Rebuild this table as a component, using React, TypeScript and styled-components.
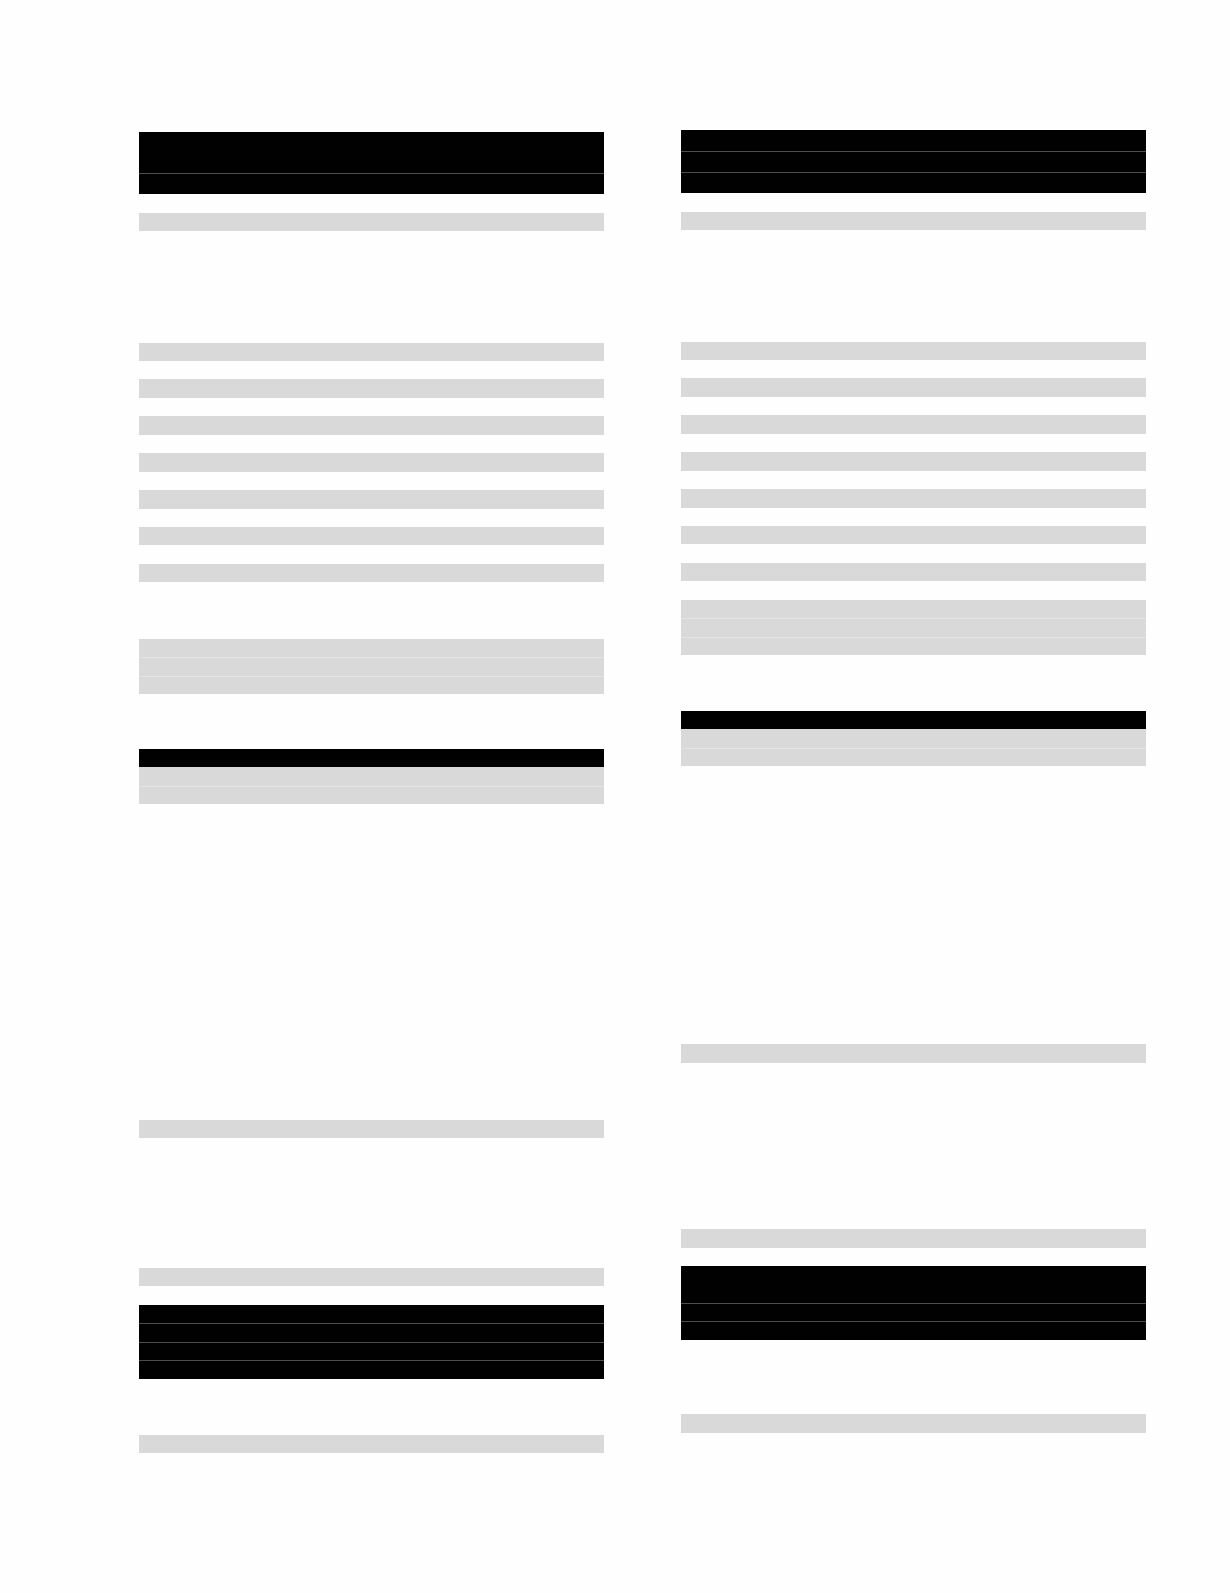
import React from "react";
import styled, { createGlobalStyle } from "styled-components";

type Tone = "dark" | "light";

interface Row {
  h: number;
  tone: Tone;
}

interface Block {
  top: number;
  rows: Row[];
}

const dark = (...hs: number[]): Row[] => hs.map((h) => ({ h, tone: "dark" as Tone }));
const light = (...hs: number[]): Row[] => hs.map((h) => ({ h, tone: "light" as Tone }));

// seven single grey lines, evenly spaced
const ruled = (start: number): Block[] =>
  Array.from({ length: 7 }, (_, i) => ({ top: start + i * 36.9, rows: light(18.5) }));

const LEFT: Block[] = [
  { top: 132, rows: dark(41, 21) },
  { top: 212.5, rows: light(18.5) },
  ...ruled(342.5),
  { top: 639, rows: light(18.5, 18.5, 18.5) },
  { top: 749, rows: [...dark(18.5), ...light(18.5, 18.5)] },
  { top: 1120, rows: light(18.5) },
  { top: 1268, rows: light(18.5) },
  { top: 1305, rows: dark(18.5, 18.5, 18.5, 18.5) },
  { top: 1435, rows: light(18.5) },
];

const RIGHT: Block[] = [
  { top: 130, rows: dark(21, 21, 21) },
  { top: 211.5, rows: light(18.5) },
  ...ruled(341.5),
  { top: 600, rows: light(18.5, 18.5, 18.5) },
  { top: 711, rows: [...dark(18.5), ...light(18.5, 18.5)] },
  { top: 1044.5, rows: light(18.5) },
  { top: 1229.5, rows: light(18.5) },
  { top: 1266, rows: dark(37, 18.5, 18.5) },
  { top: 1414.5, rows: light(18.5) },
];

const Column: React.FC<{ blocks: Block[] }> = ({ blocks }) => {
  let bottom = 0;
  return (
    <ColumnWrap>
      {blocks.map((block, i) => {
        const gap = block.top - bottom;
        bottom = block.top + block.rows.reduce((sum, r) => sum + r.h, 0);
        return (
          <BlockBox key={i} $gap={gap}>
            {block.rows.map((row, j) => (
              <Line
                key={j}
                $h={row.h}
                $tone={row.tone}
                $ruled={j > 0 && block.rows[j - 1].tone === row.tone}
              />
            ))}
          </BlockBox>
        );
      })}
    </ColumnWrap>
  );
};

export default function App() {
  return (
    <>
      <GlobalStyle />
      <Page>
        <Column blocks={LEFT} />
        <Column blocks={RIGHT} />
      </Page>
    </>
  );
}

const GlobalStyle = createGlobalStyle`
  html, body {
    margin: 0;
    padding: 0;
    background: #fefefe;
    font-family: "Liberation Sans", Arial, sans-serif;
  }
`;

const Page = styled.div`
  width: 1230px;
  min-height: 1593px;
  box-sizing: border-box;
  padding-left: 139px;
  display: grid;
  grid-template-columns: 465px 465px;
  column-gap: 77px;
  align-items: start;
`;

const ColumnWrap = styled.div`
  display: flex;
  flex-direction: column;
`;

const BlockBox = styled.div<{ $gap: number }>`
  margin-top: ${(p) => p.$gap}px;
  display: flex;
  flex-direction: column;
`;

const Line = styled.div<{ $h: number; $tone: Tone; $ruled: boolean }>`
  height: ${(p) => p.$h}px;
  background: ${(p) => (p.$tone === "dark" ? "#010101" : "#d9d9d9")};
  box-shadow: ${(p) =>
    p.$ruled
      ? `inset 0 1px 0 ${p.$tone === "dark" ? "#4d4d4d" : "#e4e4e4"}`
      : "none"};
`;
